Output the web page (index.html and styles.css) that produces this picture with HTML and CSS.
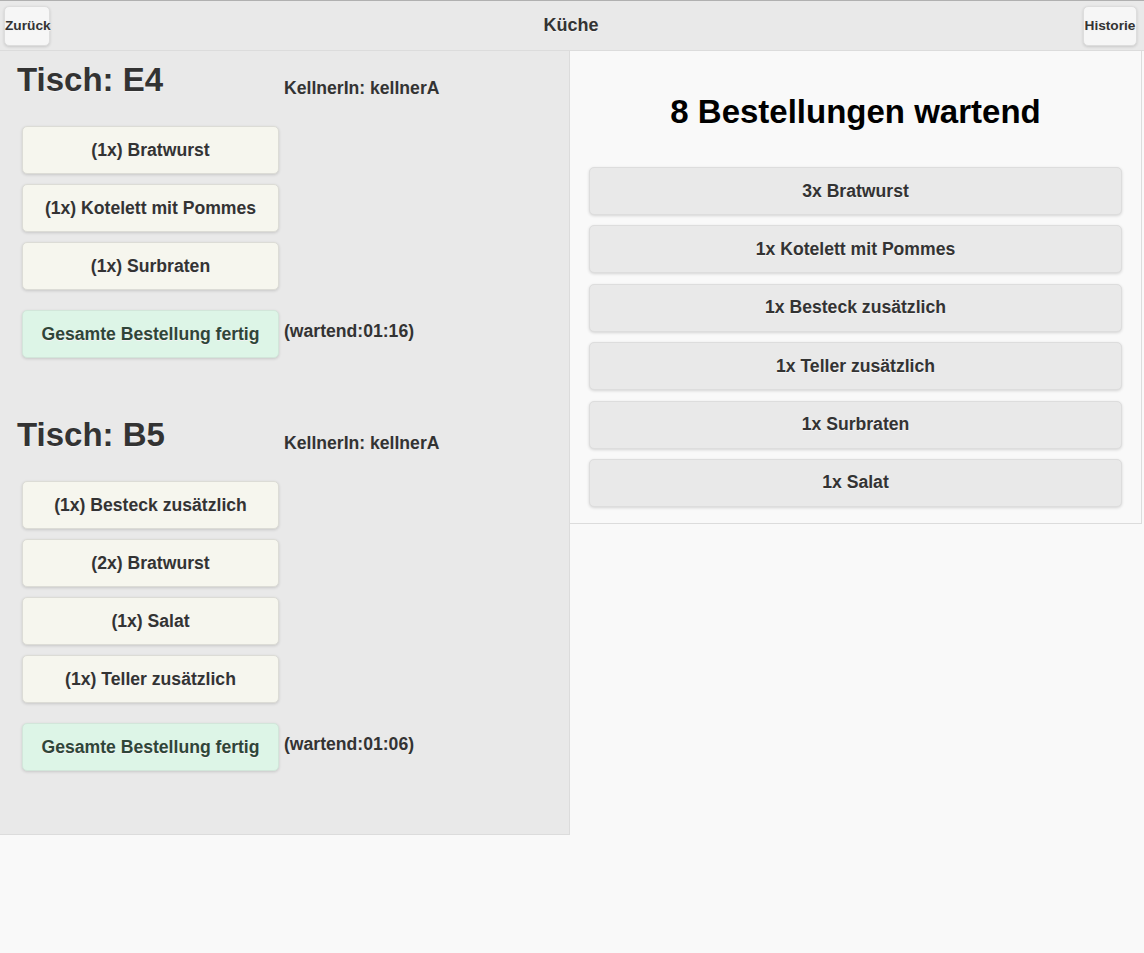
FILE: index.html
```html
<!DOCTYPE html>
<html lang="de">
<head>
<meta charset="utf-8">
<title>Küche</title>
<link rel="stylesheet" href="styles.css">
</head>
<body>
<header class="header">
  <button class="hbtn back">Zurück</button>
  <h2 class="htitle">Küche</h2>
  <button class="hbtn hist">Historie</button>
</header>
<main class="content">
  <section class="left">
    <div class="order">
      <div class="row head">
        <h1 class="tisch">Tisch: E4</h1>
        <span class="kellner">KellnerIn: kellnerA</span>
      </div>
      <div class="items">
        <button class="item">(1x) Bratwurst</button>
        <button class="item">(1x) Kotelett mit Pommes</button>
        <button class="item">(1x) Surbraten</button>
      </div>
      <div class="row done">
        <button class="item green">Gesamte Bestellung fertig</button>
        <span class="wartend">(wartend:01:16)</span>
      </div>
    </div>
    <div class="order">
      <div class="row head">
        <h1 class="tisch">Tisch: B5</h1>
        <span class="kellner">KellnerIn: kellnerA</span>
      </div>
      <div class="items">
        <button class="item">(1x) Besteck zusätzlich</button>
        <button class="item">(2x) Bratwurst</button>
        <button class="item">(1x) Salat</button>
        <button class="item">(1x) Teller zusätzlich</button>
      </div>
      <div class="row done">
        <button class="item green">Gesamte Bestellung fertig</button>
        <span class="wartend">(wartend:01:06)</span>
      </div>
    </div>
  </section>
  <section class="right">
    <h1 class="count">8 Bestellungen wartend</h1>
    <div class="sum">
      <button class="sitem">3x Bratwurst</button>
      <button class="sitem">1x Kotelett mit Pommes</button>
      <button class="sitem">1x Besteck zusätzlich</button>
      <button class="sitem">1x Teller zusätzlich</button>
      <button class="sitem">1x Surbraten</button>
      <button class="sitem">1x Salat</button>
    </div>
  </section>
</main>
</body>
</html>
```

FILE: styles.css
```css
* { box-sizing: border-box; }
html, body {
  margin: 0;
  padding: 0;
  background: #f9f9f9;
  font-family: "Liberation Sans", Arial, sans-serif;
  color: #333;
}
button {
  font-family: "Liberation Sans", Arial, sans-serif;
  cursor: pointer;
}
.header {
  height: 51px;
  background: #e9e9e9;
  border-top: 1px solid #b0b0b0;
  border-bottom: 1px solid #dcdcdc;
  display: grid;
  grid-template-columns: 1fr auto 1fr;
  align-items: center;
  padding: 0 7px 0 4px;
}
.hbtn {
  height: 40px;
  padding: 0;
  background: #f6f6f6;
  border: 1px solid #dddddd;
  border-radius: 5px;
  box-shadow: 0 1px 3px rgba(0,0,0,0.15);
  font-size: 13.7px;
  font-weight: bold;
  color: #333;
  text-shadow: 0 1px 0 #f3f3f3;
}
.back { width: 46px; justify-self: start; }
.hist { width: 54px; justify-self: end; }
.htitle {
  margin: 0 0 0 1px;
  font-size: 18px;
  font-weight: bold;
  color: #333;
  text-shadow: 0 1px 0 #f3f3f3;
}
.content {
  display: flex;
  align-items: flex-start;
}
.left {
  width: 570px;
  background: #e9e9e9;
  border-right: 1px solid #dcdcdc;
  border-bottom: 1px solid #dcdcdc;
  padding-bottom: 15px;
}
.order {
  padding-top: 10px;
  margin-bottom: 48px;
}
.row {
  display: flex;
  align-items: flex-start;
}
.tisch {
  margin: 0 0 0 17px;
  width: 267px;
  font-size: 33px;
  line-height: 37px;
  font-weight: bold;
  color: #333;
  text-shadow: 0 1px 0 #f3f3f3;
}
.kellner {
  margin-top: 18px;
  font-size: 17.6px;
  line-height: 18px;
  font-weight: bold;
  color: #333;
}
.items {
  display: flex;
  flex-direction: column;
  gap: 10px;
  margin-top: 28px;
  padding-left: 22px;
}
.item {
  width: 257px;
  height: 48px;
  margin: 0;
  padding: 0;
  background: #f6f6ee;
  border: 1px solid #dcdcd6;
  border-radius: 5px;
  box-shadow: 0 1px 3px rgba(0,0,0,0.15);
  font-size: 17.6px;
  font-weight: bold;
  color: #333;
  text-shadow: 0 1px 0 #f3f3f3;
}
.done {
  margin-top: 20px;
  padding-left: 22px;
}
.green {
  background: #ddf5e7;
  border-color: #d2e6da;
  color: #2f4538;
}
.wartend {
  margin-top: 12px;
  margin-left: 5px;
  font-size: 17.6px;
  line-height: 18px;
  font-weight: bold;
  color: #333;
}
.right {
  width: 572px;
  background: #f9f9f9;
  border-right: 1px solid #dcdcdc;
  border-bottom: 1px solid #dcdcdc;
  padding: 42px 19px 16px 19px;
}
.count {
  margin: 0;
  text-align: center;
  font-size: 33px;
  line-height: 37px;
  font-weight: bold;
  color: #000;
}
.sum {
  display: flex;
  flex-direction: column;
  gap: 10.4px;
  margin-top: 37px;
}
.sitem {
  width: 100%;
  height: 48px;
  margin: 0;
  padding: 0;
  background: #e9e9e9;
  border: 1px solid #dddddd;
  border-radius: 5px;
  box-shadow: 0 1px 3px rgba(0,0,0,0.15);
  font-size: 17.6px;
  font-weight: bold;
  color: #333;
  text-shadow: 0 1px 0 #f3f3f3;
}
```
